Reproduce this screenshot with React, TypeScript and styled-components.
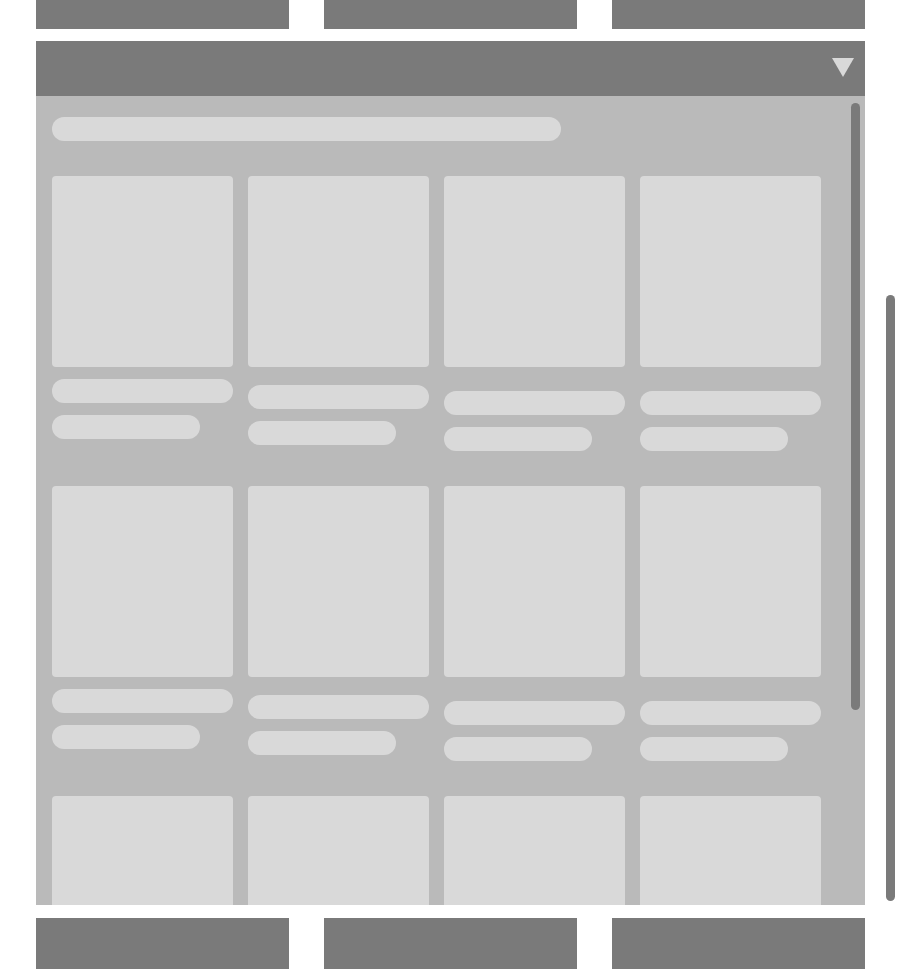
import styled, { createGlobalStyle } from "styled-components";

const GlobalStyle = createGlobalStyle`
  html, body {
    margin: 0;
    padding: 0;
    background: #ffffff;
    font-family: "Liberation Sans", Arial, sans-serif;
    overflow: hidden;
  }
`;

interface ICard {
  offset: number
}

const cards: ICard[] = [
  { offset: 12 }, { offset: 18 }, { offset: 24 }, { offset: 24 },
  { offset: 12 }, { offset: 18 }, { offset: 24 }, { offset: 24 },
  { offset: 12 }, { offset: 18 }, { offset: 24 }, { offset: 24 },
];

const Card: React.FC<ICard> = ({ offset }) => {
  return (
    <CardBox>
      <CardImage />
      <TitleLine $offset={offset} />
      <SubLine />
    </CardBox>
  );
};

export default function App() {
  return (
    <>
      <GlobalStyle />
      <Page>
        <NavRow>
          <NavTab />
          <NavTab />
          <NavTab />
        </NavRow>
        <Panel>
          <PanelHeader>
            <svg width="22" height="19" viewBox="0 0 22 19">
              <polygon points="0,0 22,0 11,19" fill="#d9d9d9" />
            </svg>
          </PanelHeader>
          <PanelBody>
            <SearchBar />
            <Grid>
              {cards.map((c, i) => (
                <Card key={i} offset={c.offset} />
              ))}
            </Grid>
            <InnerThumb />
          </PanelBody>
        </Panel>
        <FooterRow>
          <FooterTab />
          <FooterTab />
          <FooterTab />
        </FooterRow>
        <PageThumb />
      </Page>
    </>
  );
}

const Page = styled.div`
  position: relative;
  width: 900px;
  height: 969px;
  padding-left: 36px;
  box-sizing: border-box;
  display: flex;
  flex-direction: column;
  overflow: hidden;
`;

const NavRow = styled.div`
  width: 829px;
  display: grid;
  grid-template-columns: repeat(3, 253px);
  column-gap: 35px;
`;

const NavTab = styled.div`
  height: 29px;
  background: #7a7a7a;
`;

const Panel = styled.div`
  width: 829px;
  height: 864px;
  margin-top: 12px;
  display: flex;
  flex-direction: column;
`;

const PanelHeader = styled.div`
  height: 55px;
  flex-shrink: 0;
  background: #7a7a7a;
  display: flex;
  align-items: center;
  justify-content: flex-end;
  padding-right: 11px;
  padding-bottom: 2px;
  box-sizing: border-box;
`;

const PanelBody = styled.div`
  position: relative;
  flex: 1;
  background: #bababa;
  padding: 21px 44px 0 16px;
  overflow: hidden;
  display: flex;
  flex-direction: column;
  gap: 35px;
`;

const SearchBar = styled.div`
  width: 509px;
  height: 24px;
  border-radius: 12px;
  background: #d9d9d9;
  flex-shrink: 0;
`;

const Grid = styled.div`
  display: grid;
  grid-template-columns: repeat(4, 181px);
  column-gap: 15px;
  row-gap: 35px;
  align-items: start;
`;

const CardBox = styled.div`
  display: flex;
  flex-direction: column;
`;

const CardImage = styled.div`
  height: 191px;
  border-radius: 4px;
  background: #d9d9d9;
`;

const TitleLine = styled.div<{ $offset: number }>`
  height: 24px;
  margin-top: ${(p) => p.$offset}px;
  border-radius: 12px;
  background: #d9d9d9;
`;

const SubLine = styled.div`
  width: 148px;
  height: 24px;
  margin-top: 12px;
  border-radius: 12px;
  background: #d9d9d9;
`;

const InnerThumb = styled.div`
  position: absolute;
  top: 7px;
  right: 5px;
  width: 9px;
  height: 607px;
  border-radius: 5px;
  background: #7a7a7a;
`;

const FooterRow = styled.div`
  width: 829px;
  margin-top: 13px;
  display: grid;
  grid-template-columns: repeat(3, 253px);
  column-gap: 35px;
`;

const FooterTab = styled.div`
  height: 51px;
  background: #7a7a7a;
`;

const PageThumb = styled.div`
  position: absolute;
  top: 295px;
  left: 886px;
  width: 9px;
  height: 606px;
  border-radius: 5px;
  background: #7a7a7a;
`;
